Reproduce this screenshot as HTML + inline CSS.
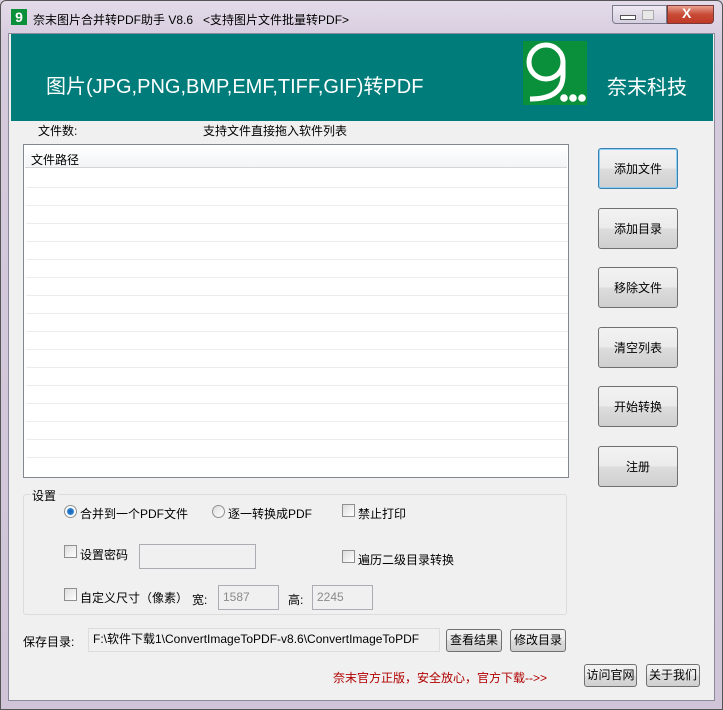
<!DOCTYPE html>
<html><head><meta charset="utf-8"><style>
*{box-sizing:border-box;margin:0;padding:0}
body{width:723px;height:710px;overflow:hidden;background:#d9cfe0;font-family:"Liberation Sans","Noto Sans CJK SC",sans-serif;font-size:12px;color:#000;position:relative}
.a{position:absolute}
.frame{left:0;top:0;width:723px;height:710px;border:1px solid #555;border-radius:6px 6px 0 0;background:linear-gradient(#e4dbea,#d5cbdd 40px,#cfc4d8)}
.client{left:8px;top:33px;width:707px;height:668px;background:#f0f0f0;border:1px solid #8a8a9a}
.btn{position:absolute;border:1px solid #707070;border-radius:3px;background:linear-gradient(#f2f2f2,#ebebeb 50%,#dddddd 50%,#cfcfcf);text-align:center;font-size:12px}
.inp{position:absolute;border:1px solid #abadb3;background:#f0f0f0;color:#8a8a8a;padding-left:4px;font-size:12px}
.cb{position:absolute;width:13px;height:13px;border:1px solid #8e8f8f;background:linear-gradient(135deg,#dcdcdc,#fff)}
.rd{position:absolute;width:13px;height:13px;border:1px solid #8e8f8f;border-radius:50%;background:linear-gradient(135deg,#ddd,#fff)}
.t{position:absolute;white-space:nowrap}
.row{position:absolute;left:2px;width:542px;height:1px;background:#ececec}
</style></head><body>
<div class="a frame"></div>
<div class="a" style="left:11px;top:9px;width:16px;height:16px;background:#0a8f3a;color:#fff;font-size:14px;line-height:16px;text-align:center;font-weight:bold">9</div>
<div class="t" style="left:33px;top:11px;font-size:12px">奈末图片合并转PDF助手 V8.6 &nbsp;&nbsp;&lt;支持图片文件批量转PDF&gt;</div>
<div class="a" style="left:612px;top:5px;width:55px;height:19px;border:1px solid #7a7a8a;border-radius:0 0 0 4px;background:linear-gradient(#eee9f2,#d6cfe0)"></div>
<div class="a" style="left:620px;top:15px;width:16px;height:5px;background:#fff;border:1px solid #555"></div>
<div class="a" style="left:642px;top:10px;width:12px;height:10px;border:1px solid #aaa;background:#e8e8e8"></div>
<div class="a" style="left:667px;top:5px;width:47px;height:19px;border:1px solid #7a3a3a;border-radius:0 0 4px 0;background:linear-gradient(#e8a090,#c74a35 50%,#c03a26)"></div>
<div class="t" style="left:682px;top:5px;color:#fff;font-weight:bold;font-size:14px">X</div>
<div class="a client"></div>
<div class="a" style="left:11px;top:34px;width:702px;height:87px;background:#007d7b"></div>
<div class="t" style="left:46px;top:70px;color:#fff;font-size:20px">图片(JPG,PNG,BMP,EMF,TIFF,GIF)转PDF</div>
<svg class="a" style="left:523px;top:41px" width="64" height="64" viewBox="0 0 64 64">
<rect width="64" height="64" fill="#0a8f3a"/>
<circle cx="23" cy="21" r="17" fill="none" stroke="#fff" stroke-width="5"/>
<path d="M40 20 L40 34 Q40 58 7 58" fill="none" stroke="#fff" stroke-width="5"/>
<circle cx="41" cy="57" r="3.8" fill="#fff"/><circle cx="50" cy="57" r="3.8" fill="#fff"/><circle cx="59" cy="57" r="3.8" fill="#fff"/>
</svg>
<div class="t" style="left:607px;top:71px;color:#fff;font-size:20px">奈末科技</div>
<div class="t" style="left:38px;top:122px">文件数:</div>
<div class="t" style="left:203px;top:122px">支持文件直接拖入软件列表</div>
<div class="a" style="left:23px;top:144px;width:546px;height:334px;border:1px solid #828790;background:#fff">
<div class="a" style="left:1px;top:1px;width:542px;height:22px;background:linear-gradient(#fff,#f3f4f6);border-bottom:1px solid #d5d5d5"></div>
<div class="t" style="left:7px;top:6px">文件路径</div>
<div class="row" style="top:42px"></div><div class="row" style="top:60px"></div><div class="row" style="top:78px"></div><div class="row" style="top:96px"></div><div class="row" style="top:114px"></div><div class="row" style="top:132px"></div><div class="row" style="top:150px"></div><div class="row" style="top:168px"></div><div class="row" style="top:186px"></div><div class="row" style="top:204px"></div><div class="row" style="top:222px"></div><div class="row" style="top:240px"></div><div class="row" style="top:258px"></div><div class="row" style="top:276px"></div><div class="row" style="top:294px"></div><div class="row" style="top:312px"></div>
</div>
<div class="btn" style="left:598px;top:148px;width:80px;height:41px;line-height:41px;border-color:#3c7fb1;box-shadow:inset 0 0 0 1px #8ed0f2">添加文件</div>
<div class="btn" style="left:598px;top:208px;width:80px;height:41px;line-height:41px">添加目录</div>
<div class="btn" style="left:598px;top:267px;width:80px;height:41px;line-height:41px">移除文件</div>
<div class="btn" style="left:598px;top:327px;width:80px;height:41px;line-height:41px">清空列表</div>
<div class="btn" style="left:598px;top:386px;width:80px;height:41px;line-height:41px">开始转换</div>
<div class="btn" style="left:598px;top:446px;width:80px;height:41px;line-height:41px">注册</div>
<div class="a" style="left:23px;top:494px;width:544px;height:121px;border:1px solid #dcdcdc;border-radius:3px"></div>
<div class="t" style="left:30px;top:487px;background:#f0f0f0;padding:0 2px">设置</div>
<div class="rd" style="left:64px;top:505px;background:radial-gradient(circle,#1a5fb0 0,#2a80d0 3px,#fff 4px)"></div>
<div class="t" style="left:80px;top:505px">合并到一个PDF文件</div>
<div class="rd" style="left:212px;top:505px"></div>
<div class="t" style="left:228px;top:505px">逐一转换成PDF</div>
<div class="cb" style="left:342px;top:504px"></div>
<div class="t" style="left:358px;top:505px">禁止打印</div>
<div class="cb" style="left:64px;top:545px"></div>
<div class="t" style="left:80px;top:546px">设置密码</div>
<div class="inp" style="left:139px;top:544px;width:117px;height:25px"></div>
<div class="cb" style="left:342px;top:550px"></div>
<div class="t" style="left:358px;top:551px">遍历二级目录转换</div>
<div class="cb" style="left:64px;top:588px"></div>
<div class="t" style="left:80px;top:589px">自定义尺寸（像素）</div>
<div class="t" style="left:192px;top:591px">宽:</div>
<div class="inp" style="left:218px;top:585px;width:61px;height:25px;line-height:22px">1587</div>
<div class="t" style="left:288px;top:591px">高:</div>
<div class="inp" style="left:312px;top:585px;width:61px;height:25px;line-height:22px">2245</div>
<div class="t" style="left:23px;top:633px">保存目录:</div>
<div class="inp" style="left:88px;top:628px;width:352px;height:24px;line-height:20px;color:#000;background:#f0f0f0;border-color:#dcdcdc">F:\软件下载1\ConvertImageToPDF-v8.6\ConvertImageToPDF</div>
<div class="btn" style="left:446px;top:629px;width:56px;height:23px;line-height:21px">查看结果</div>
<div class="btn" style="left:510px;top:629px;width:56px;height:23px;line-height:21px">修改目录</div>
<div class="t" style="left:333px;top:669px;color:#b00000">奈末官方正版，安全放心，官方下载--&gt;&gt;</div>
<div class="btn" style="left:584px;top:664px;width:53px;height:23px;line-height:21px">访问官网</div>
<div class="btn" style="left:646px;top:664px;width:54px;height:23px;line-height:21px">关于我们</div>
</body></html>
